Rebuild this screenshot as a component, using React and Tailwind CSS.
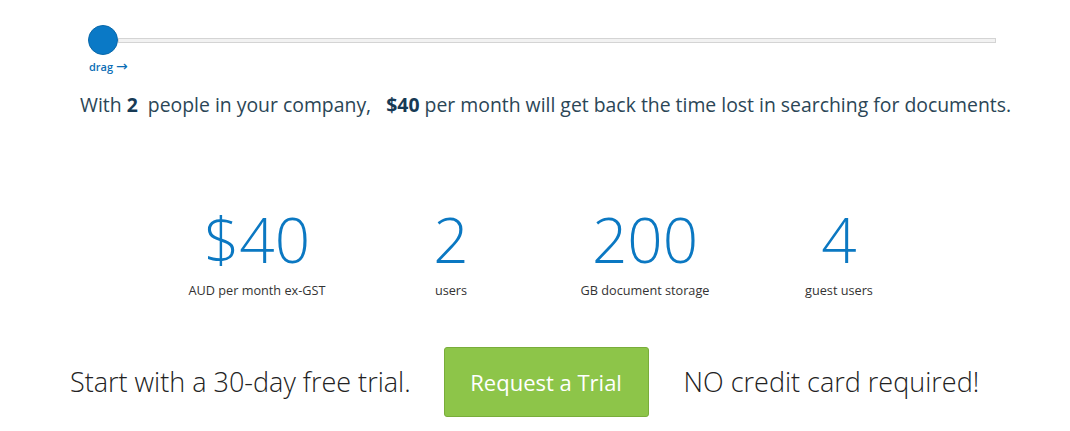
import React from 'react'

const STATS = [
  { value: '$40', label: 'AUD per month ex-GST' },
  { value: '2', label: 'users' },
  { value: '200', label: 'GB document storage' },
  { value: '4', label: 'guest users' },
]

export default function App() {
  return (
    <div className="w-[1070px] h-[431px] bg-white overflow-hidden font-['Open_Sans',sans-serif]">
      {/* slider */}
      <div className="pl-[88px] pr-[74px] pt-[25px]">
        <div className="flex items-center">
          <div className="w-[30px] h-[30px] rounded-full bg-[#0a79c6] border border-[#0968aa] shrink-0" />
          <div className="flex-1 h-[5px] bg-[#f2f2f2] border border-[#d4d4d4]" />
        </div>
        <div className="mt-[4px] pl-[1px] text-[11px] font-semibold text-[#0a6db5] leading-none">
          drag <span className="text-[14px] font-normal font-['DejaVu_Sans',sans-serif]">→</span>
        </div>
      </div>

      {/* sentence */}
      <p className="mt-[20px] pl-[80px] text-[19.4px] text-[#2b4656] leading-6 whitespace-pre">
        With <b className="text-[#173a55]">2</b>  people in your company,   <b className="text-[#173a55]">$40</b> per month will get back the time lost in searching for documents.
      </p>

      {/* stats */}
      <div className="mt-[91px] ml-[160px] w-[776px] grid grid-cols-4">
        {STATS.map(s => (
          <div key={s.label} className="flex flex-col items-center">
            <div className="text-[62px] font-light text-[#0b78c2] leading-[62px]">{s.value}</div>
            <div className="mt-[12px] text-[12.7px] text-[#333] leading-4">{s.label}</div>
          </div>
        ))}
      </div>

      {/* trial */}
      <div className="mt-[49px] pl-[70px] flex items-center">
        <span className="text-[27px] font-light text-[#222]">Start with a 30-day free trial.</span>
        <button className="ml-[33px] w-[205px] h-[70px] rounded-[3px] bg-[#8dc549] border border-[#79ad3a] text-white text-[22px]">
          Request a Trial
        </button>
        <span className="ml-[35px] text-[27px] font-light text-[#222]">NO credit card required!</span>
      </div>
    </div>
  )
}
